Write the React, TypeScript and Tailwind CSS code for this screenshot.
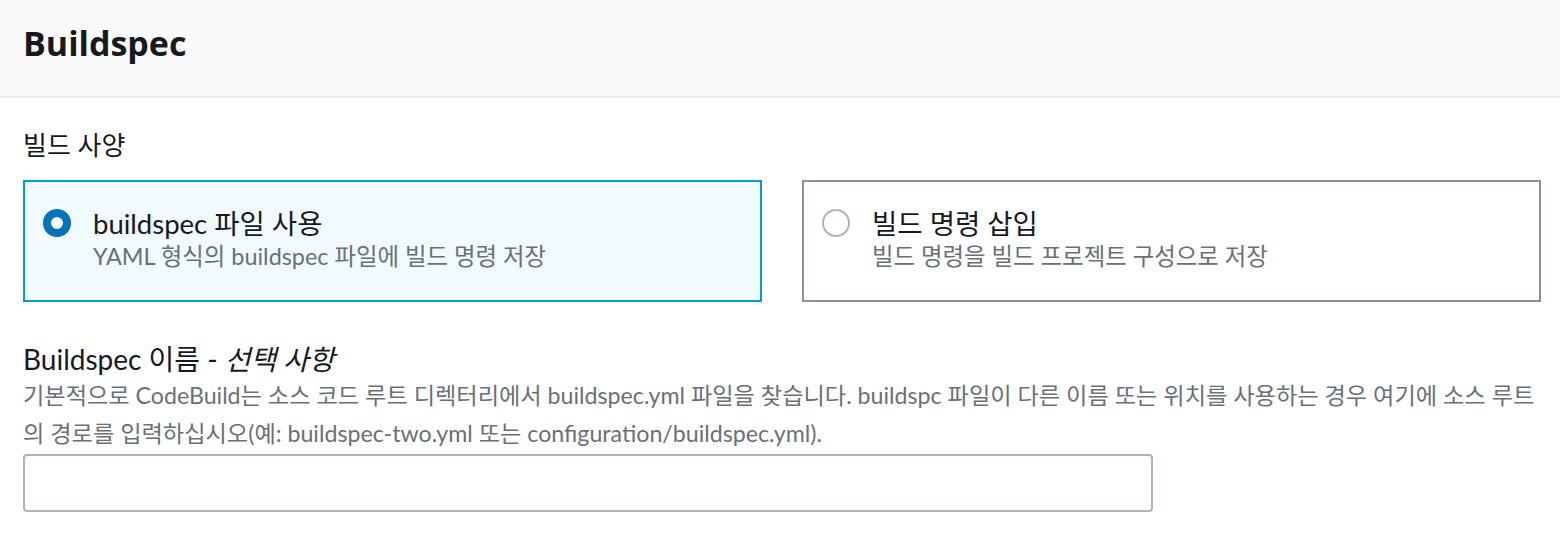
import React from "react";

const font = { fontFamily: 'Lato, "Noto Sans CJK KR", sans-serif' };
const titleFont = { fontFamily: '"Open Sans", "Noto Sans CJK KR", sans-serif' };

function Radio({ checked }: { checked: boolean }) {
  return checked ? (
    <span className="mt-[1px] h-[28px] w-[28px] shrink-0 rounded-full border-[8px] border-[#0073bb] bg-white" />
  ) : (
    <span className="mt-[1px] h-[28px] w-[28px] shrink-0 rounded-full border-2 border-[#aab7b8] bg-white" />
  );
}

function Tile({
  checked,
  title,
  desc,
}: {
  checked: boolean;
  title: string;
  desc: string;
}) {
  return (
    <div
      className={`flex h-[122px] flex-1 items-start gap-[22px] border-2 pl-[18px] pt-[26px] ${
        checked ? "border-[#00a1c9] bg-[#f1faff]" : "border-[#879596] bg-white"
      }`}
    >
      <Radio checked={checked} />
      <div className="flex flex-col">
        <span className="text-[27.5px] leading-[32px] text-[#16191f]">{title}</span>
        <span className="text-[23.4px] leading-[32px] text-[#687078]">{desc}</span>
      </div>
    </div>
  );
}

export default function App() {
  return (
    <div className="h-[538px] w-[1560px] overflow-hidden bg-white" style={font}>
      <div className="flex h-[98px] items-center border-b-2 border-[#eaeded] bg-[#fafafa] px-[23px] pb-[10px]">
        <h1 className="text-[34px] font-bold leading-none text-[#16191f]" style={titleFont}>
          Buildspec
        </h1>
      </div>
      <div className="pl-[23px] pr-[19px] pt-[30px]">
        <div className="text-[26px] leading-[34px] text-[#16191f]">빌드 사양</div>
        <div className="mt-[18px] flex gap-[40px]">
          <Tile
            checked
            title="buildspec 파일 사용"
            desc="YAML 형식의 buildspec 파일에 빌드 명령 저장"
          />
          <Tile
            checked={false}
            title="빌드 명령 삽입"
            desc="빌드 명령을 빌드 프로젝트 구성으로 저장"
          />
        </div>
        <div className="mt-[40px] text-[28px] leading-[34px] text-[#16191f]">
          Buildspec 이름 - <i>선택 사항</i>
        </div>
        <p className="text-[23.2px] leading-[38px] text-[#687078]">
          기본적으로 CodeBuild는 소스 코드 루트 디렉터리에서 buildspec.yml 파일을 찾습니다. buildspc 파일이 다른 이름 또는 위치를 사용하는 경우 여기에 소스 루트
          <br />
          의 경로를 입력하십시오(예: buildspec-two.yml 또는 configuration/buildspec.yml).
        </p>
        <input
          className="mt-[2px] block h-[58px] w-[1130px] rounded-[4px] border-2 border-[#aab7b8] bg-white outline-none"
          type="text"
        />
      </div>
    </div>
  );
}
